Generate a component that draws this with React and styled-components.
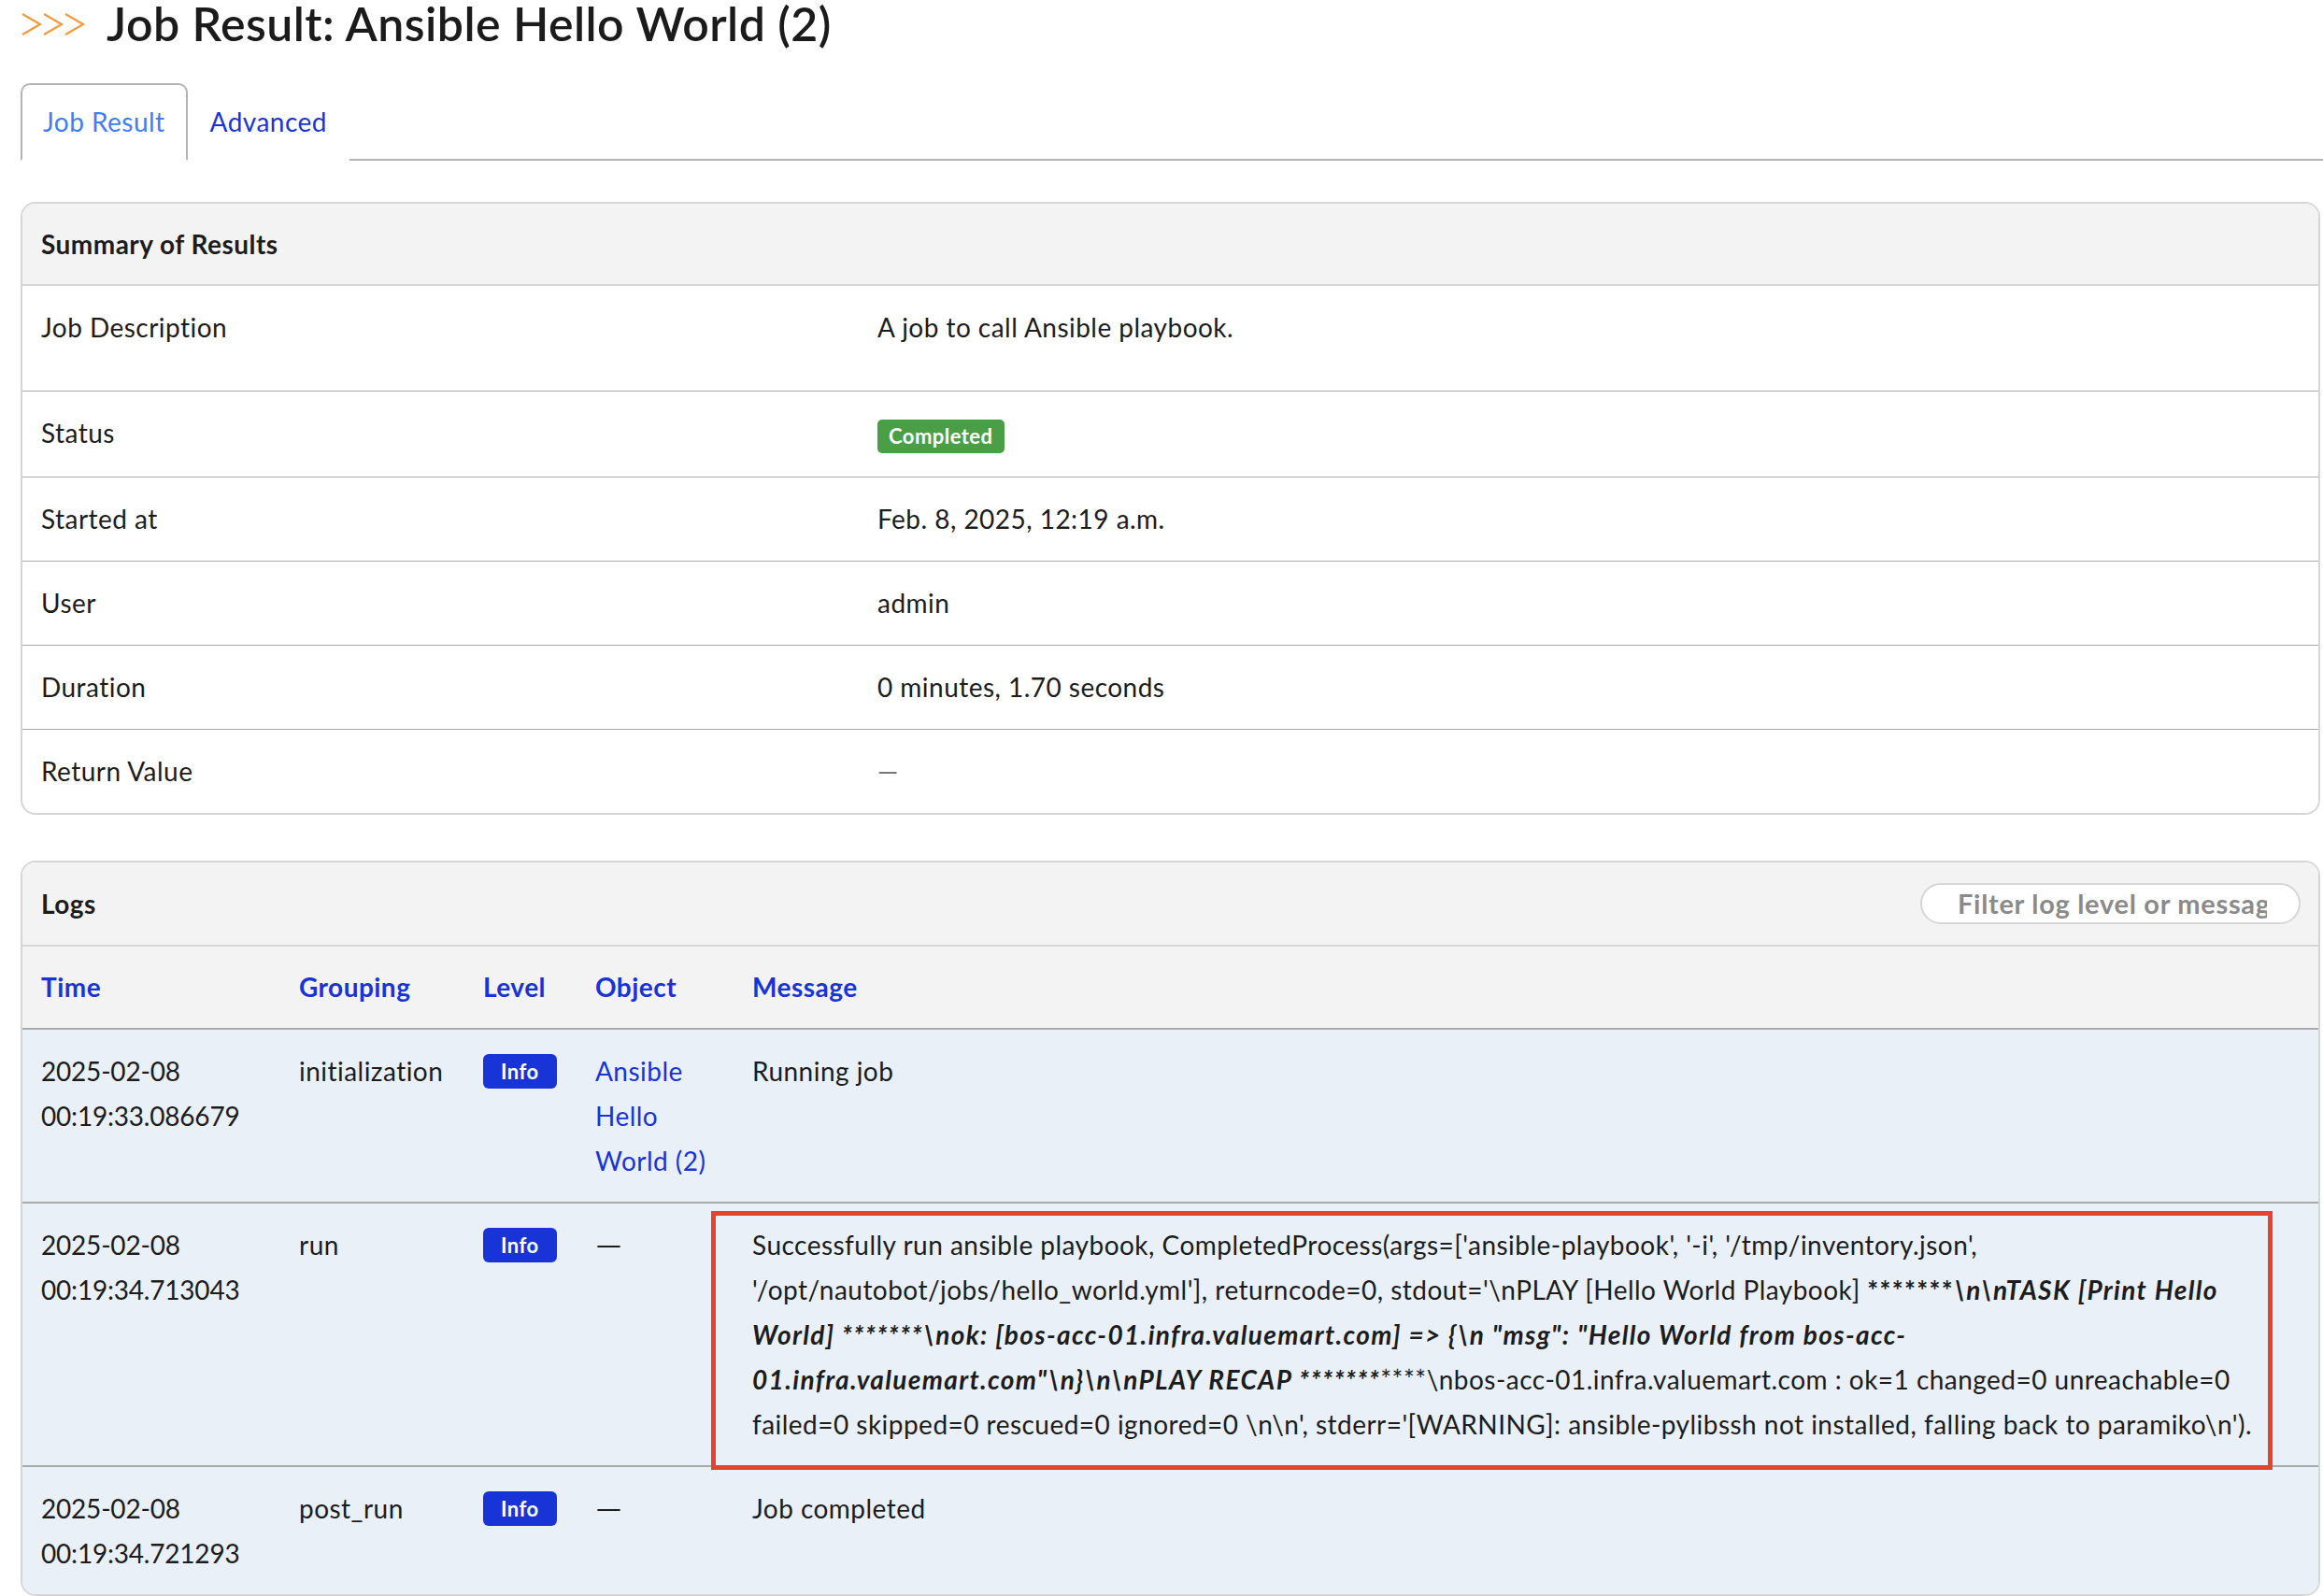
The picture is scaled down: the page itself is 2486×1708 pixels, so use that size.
import React from 'react';
import styled, { createGlobalStyle } from 'styled-components';

const GlobalStyle = createGlobalStyle`
  body {
    margin: 0;
    background: #ffffff;
    color: #1c1c1c;
    font-family: Lato, "Noto Sans", sans-serif;
    font-size: 28px;
    letter-spacing: 0.47px;
  }
`;

const logs = [
  {
    date: '2025-02-08',
    time: '00:19:33.086679',
    grouping: 'initialization',
    object: 'Ansible Hello World (2)',
    message: 'Running job',
  },
  {
    date: '2025-02-08',
    time: '00:19:34.713043',
    grouping: 'run',
    object: null,
    message: 'playbook',
    marked: true,
  },
  {
    date: '2025-02-08',
    time: '00:19:34.721293',
    grouping: 'post_run',
    object: null,
    message: 'Job completed',
  },
];

function Chevrons() {
  return (
    <svg width="70" height="28" viewBox="0 0 70 28" fill="none">
      {[0, 23, 46].map((x) => (
        <path
          key={x}
          d={`M${x + 2} 3 L${x + 21} 14 L${x + 2} 25`}
          stroke="#f29a3a"
          strokeWidth="2.2"
        />
      ))}
    </svg>
  );
}

function PlaybookMessage() {
  return (
    <>
      {"Successfully run ansible playbook, CompletedProcess(args=['ansible-playbook', '-i', '/tmp/inventory.json', '/opt/nautobot/jobs/hello_world.yml'], returncode=0, stdout='\\nPLAY [Hello World Playbook] "}
      <Strong>*******</Strong>
      <Strong>
        <em>
          {'\\n\\nTASK [Print Hello World] *******\\nok: [bos-acc-01.infra.valuemart.com] => {\\n "msg": "Hello World from bos-acc-01.infra.valuemart.com"\\n}\\n\\nPLAY RECAP *******'}
        </em>
      </Strong>
      {"****\\nbos-acc-01.infra.valuemart.com : ok=1 changed=0 unreachable=0 failed=0 skipped=0 rescued=0 ignored=0 \\n\\n', stderr='[WARNING]: ansible-pylibssh not installed, falling back to paramiko\\n')."}
    </>
  );
}

export default function App() {
  const summary = [
    { label: 'Status', value: <StatusBadge>Completed</StatusBadge> },
    { label: 'Started at', value: 'Feb. 8, 2025, 12:19 a.m.' },
    { label: 'User', value: 'admin' },
    { label: 'Duration', value: '0 minutes, 1.70 seconds' },
    { label: 'Return Value', value: <Muted>—</Muted> },
  ];

  return (
    <Page>
      <GlobalStyle />
      <Title>
        <Chevrons />
        <span>Job Result: Ansible Hello World (2)</span>
      </Title>

      <TabBar>
        <Tab $active>Job Result</Tab>
        <Tab>Advanced</Tab>
      </TabBar>

      <Panel>
        <PanelHeading>Summary of Results</PanelHeading>
        <SummaryTable>
          <tbody>
            <tr>
              <LabelCell>Job Description</LabelCell>
              <td>
                <Description>A job to call Ansible playbook.</Description>
              </td>
            </tr>
            {summary.map((row) => (
              <tr key={row.label}>
                <LabelCell>{row.label}</LabelCell>
                <td>{row.value}</td>
              </tr>
            ))}
          </tbody>
        </SummaryTable>
      </Panel>

      <LogsPanel>
        <LogsHeading>
          <span>Logs</span>
          <FilterInput placeholder="Filter log level or message" />
        </LogsHeading>
        <LogTable>
          <colgroup>
            <col style={{ width: 274 }} />
            <col style={{ width: 197 }} />
            <col style={{ width: 120 }} />
            <col style={{ width: 168 }} />
            <col />
          </colgroup>
          <thead>
            <tr>
              <th>Time</th>
              <th>Grouping</th>
              <th>Level</th>
              <th>Object</th>
              <th>Message</th>
            </tr>
          </thead>
          <tbody>
            {logs.map((log) => (
              <tr key={log.time}>
                <TimeCell>
                  {log.date}
                  <br />
                  {log.time}
                </TimeCell>
                <td>{log.grouping}</td>
                <td>
                  <LevelBadge>Info</LevelBadge>
                </td>
                <td>{log.object ? <LinkText>{log.object}</LinkText> : <Dash>—</Dash>}</td>
                <MessageCell>
                  {log.marked ? <PlaybookMessage /> : log.message}
                  {log.marked && <Highlight />}
                </MessageCell>
              </tr>
            ))}
          </tbody>
        </LogTable>
      </LogsPanel>
    </Page>
  );
}

const Page = styled.div`
  padding: 0 3px 0 22px;
`;

const Title = styled.h1`
  display: flex;
  align-items: center;
  gap: 22px;
  margin: 0;
  height: 50px;
  font-size: 50px;
  font-weight: 600;
  line-height: 50px;
  color: #1b1b1b;
  letter-spacing: 0.45px;
  svg {
    flex: none;
    margin-top: 2px;
  }
`;

const TabBar = styled.div`
  display: flex;
  margin-top: 39px;
  margin-right: -3px;
  border-bottom: 2px solid #b3b3b3;
`;

const Tab = styled.div`
  padding: 19px 22px 20px;
  line-height: 40px;
  margin-bottom: -2px;
  border: 2px solid ${(p) => (p.$active ? '#b3b3b3' : 'transparent')};
  border-bottom-color: ${(p) => (p.$active ? '#ffffff' : 'transparent')};
  border-radius: 10px 10px 0 0;
  color: ${(p) => (p.$active ? '#3d7ff2' : '#1934d6')};
  background: #ffffff;
`;

const Panel = styled.div`
  margin-top: 44px;
  border: 2px solid #d6d6d6;
  border-radius: 16px;
  overflow: hidden;
`;

const PanelHeading = styled.div`
  padding: 23px 20px;
  line-height: 40px;
  font-weight: 700;
  background: #f3f3f3;
  border-bottom: 2px solid #d6d6d6;
`;

const SummaryTable = styled.table`
  width: 100%;
  border-collapse: collapse;
  td {
    padding: 24px 20px 25px;
    line-height: 40px;
    vertical-align: top;
  }
  tr + tr td {
    border-top: 1px solid #aaaaaa;
  }
`;

const LabelCell = styled.td`
  width: 855px;
`;

const Description = styled.p`
  margin: 0 0 23px;
`;

const StatusBadge = styled.span`
  display: inline-block;
  padding: 0 12px;
  line-height: 36px;
  font-size: 22px;
  font-weight: 700;
  color: #ffffff;
  background: #4a9e45;
  border-radius: 5px;
  vertical-align: middle;
`;

const Muted = styled.span`
  color: #777777;
`;

const Dash = styled.span`
  display: inline-block;
  transform: scaleX(1.3);
  transform-origin: left center;
`;

const LogsPanel = styled(Panel)`
  margin-top: 49px;
`;

const LogsHeading = styled.div`
  display: flex;
  align-items: center;
  justify-content: space-between;
  height: 88px;
  padding: 0 19px 0 20px;
  font-weight: 700;
  background: #f3f3f3;
  border-bottom: 2px solid #d6d6d6;
`;

const FilterInput = styled.input`
  box-sizing: border-box;
  width: 407px;
  height: 44px;
  padding: 0 34px 0 38px;
  border: 2px solid #d6d6d6;
  border-radius: 22px;
  background: #ffffff;
  font-family: inherit;
  font-size: 29px;
  font-weight: 700;
  letter-spacing: 0.7px;
  outline: none;
  &::placeholder {
    color: #8a8a8a;
    font-weight: 700;
  }
`;

const LogTable = styled.table`
  width: 100%;
  table-layout: fixed;
  border-collapse: collapse;
  th {
    padding: 20px 22px 19px;
    line-height: 47.6px;
    text-align: left;
    font-weight: 700;
    color: #1934d6;
    background: #f3f3f3;
    border-bottom: 2px solid #aaaaaa;
  }
  td {
    padding: 20px 22px;
    line-height: 48px;
    vertical-align: top;
    background: #e9f0f8;
  }
  th:first-child,
  td:first-child {
    padding-left: 20px;
  }
  tbody tr + tr td {
    border-top: 2px solid #aaaaaa;
  }
`;

const TimeCell = styled.td`
  letter-spacing: -0.2px;
`;

const LevelBadge = styled.span`
  display: inline-block;
  padding: 0 19px;
  line-height: 37px;
  font-size: 22px;
  font-weight: 700;
  color: #ffffff;
  background: #1934d6;
  border-radius: 6px;
  vertical-align: middle;
  position: relative;
  top: -3px;
`;

const LinkText = styled.span`
  color: #1934d6;
`;

const MessageCell = styled.td`
  position: relative;
  padding-right: 44px !important;
  overflow-wrap: break-word;
`;

const Strong = styled.strong`
  letter-spacing: 1.35px;
`;

const Highlight = styled.div`
  position: absolute;
  z-index: 2;
  left: -22px;
  right: 49px;
  top: 8px;
  bottom: -5px;
  border: 5px solid #e5432b;
  pointer-events: none;
`;
